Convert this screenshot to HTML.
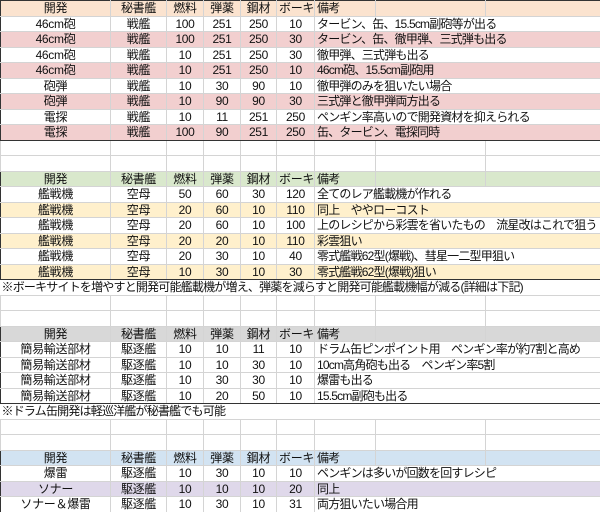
<!DOCTYPE html>
<html><head><meta charset="utf-8"><style>
html,body{margin:0;padding:0;background:#fff;width:600px;height:512px;overflow:hidden}
table{border-collapse:collapse;table-layout:fixed;width:600px;font-family:"Liberation Sans","Noto Sans CJK JP",sans-serif;font-size:12px;color:#111}
td{height:14.5px;padding:0 2px;border:1px solid #d4d4d4;white-space:nowrap;overflow:visible;text-align:center;line-height:14px;letter-spacing:-0.3px}
td.l{text-align:left;letter-spacing:-0.8px}
tr.top td{border-top:1.5px solid #333}
tr.bot td{border-bottom:1.5px solid #333}
tr.t td:first-child{border-left:1.5px solid #333}
tr.t td:last-child{border-right:1.5px solid #333}
tr.n td{border-left:none;border-right:none}
.h1 td{background:#fbe3cf}.p td{background:#f2cfcf}
.h2 td{background:#d9e8cc}.y td{background:#fff0cc}
.h3 td{background:#d8d8d8}
.h4 td{background:#d2e3f2}.v td{background:#dfd8ea}
</style></head><body>
<table>
<colgroup><col style="width:110px"><col style="width:56px"><col style="width:37px"><col style="width:37px"><col style="width:36px"><col style="width:38px"><col style="width:61px"><col style="width:110px"><col style="width:115px"></colgroup>
<tr class="t top h1"><td>開発</td><td>秘書艦</td><td>燃料</td><td>弾薬</td><td>鋼材</td><td>ボーキ</td><td class="l">備考</td><td></td><td></td></tr>
<tr class="t"><td>46cm砲</td><td>戦艦</td><td>100</td><td>251</td><td>250</td><td>10</td><td class="l" colspan="3">タービン、缶、15.5cm副砲等が出る</td></tr>
<tr class="t p"><td>46cm砲</td><td>戦艦</td><td>100</td><td>251</td><td>250</td><td>30</td><td class="l" colspan="3">タービン、缶、徹甲弾、三式弾も出る</td></tr>
<tr class="t"><td>46cm砲</td><td>戦艦</td><td>10</td><td>251</td><td>250</td><td>30</td><td class="l" colspan="3">徹甲弾、三式弾も出る</td></tr>
<tr class="t p"><td>46cm砲</td><td>戦艦</td><td>10</td><td>251</td><td>250</td><td>10</td><td class="l" colspan="3">46cm砲、15.5cm副砲用</td></tr>
<tr class="t"><td>砲弾</td><td>戦艦</td><td>10</td><td>30</td><td>90</td><td>10</td><td class="l" colspan="3">徹甲弾のみを狙いたい場合</td></tr>
<tr class="t p"><td>砲弾</td><td>戦艦</td><td>10</td><td>90</td><td>90</td><td>30</td><td class="l" colspan="3">三式弾と徹甲弾両方出る</td></tr>
<tr class="t"><td>電探</td><td>戦艦</td><td>10</td><td>11</td><td>251</td><td>250</td><td class="l" colspan="3">ペンギン率高いので開発資材を抑えられる</td></tr>
<tr class="t p bot"><td>電探</td><td>戦艦</td><td>100</td><td>90</td><td>251</td><td>250</td><td class="l" colspan="3">缶、タービン、電探同時</td></tr>
<tr><td></td><td></td><td></td><td></td><td></td><td></td><td></td><td></td><td></td></tr>
<tr><td></td><td></td><td></td><td></td><td></td><td></td><td></td><td></td><td></td></tr>
<tr class="t top h2"><td>開発</td><td>秘書艦</td><td>燃料</td><td>弾薬</td><td>鋼材</td><td>ボーキ</td><td class="l">備考</td><td></td><td></td></tr>
<tr class="t"><td>艦戦機</td><td>空母</td><td>50</td><td>60</td><td>30</td><td>120</td><td class="l" colspan="3">全てのレア艦載機が作れる</td></tr>
<tr class="t y"><td>艦戦機</td><td>空母</td><td>20</td><td>60</td><td>10</td><td>110</td><td class="l" colspan="3">同上　ややローコスト</td></tr>
<tr class="t"><td>艦戦機</td><td>空母</td><td>20</td><td>60</td><td>10</td><td>100</td><td class="l" colspan="3">上のレシピから彩雲を省いたもの　流星改はこれで狙う</td></tr>
<tr class="t y"><td>艦戦機</td><td>空母</td><td>20</td><td>20</td><td>10</td><td>110</td><td class="l" colspan="3">彩雲狙い</td></tr>
<tr class="t"><td>艦戦機</td><td>空母</td><td>20</td><td>30</td><td>10</td><td>40</td><td class="l" colspan="3">零式艦戦62型(爆戦)、彗星一二型甲狙い</td></tr>
<tr class="t y bot"><td>艦戦機</td><td>空母</td><td>10</td><td>30</td><td>10</td><td>30</td><td class="l" colspan="3">零式艦戦62型(爆戦)狙い</td></tr>
<tr class="n"><td class="l" colspan="9" style="padding-left:1px">※ボーキサイトを増やすと開発可能艦載機が増え、弾薬を減らすと開発可能艦載機幅が減る(詳細は下記)</td></tr>
<tr><td></td><td></td><td></td><td></td><td></td><td></td><td></td><td></td><td></td></tr>
<tr><td></td><td></td><td></td><td></td><td></td><td></td><td></td><td></td><td></td></tr>
<tr class="t top h3"><td>開発</td><td>秘書艦</td><td>燃料</td><td>弾薬</td><td>鋼材</td><td>ボーキ</td><td class="l">備考</td><td></td><td></td></tr>
<tr class="t"><td>簡易輸送部材</td><td>駆逐艦</td><td>10</td><td>10</td><td>11</td><td>10</td><td class="l" colspan="3">ドラム缶ピンポイント用　ペンギン率が約7割と高め</td></tr>
<tr class="t"><td>簡易輸送部材</td><td>駆逐艦</td><td>10</td><td>10</td><td>30</td><td>10</td><td class="l" colspan="3">10cm高角砲も出る　ペンギン率5割</td></tr>
<tr class="t"><td>簡易輸送部材</td><td>駆逐艦</td><td>10</td><td>30</td><td>30</td><td>10</td><td class="l" colspan="3">爆雷も出る</td></tr>
<tr class="t bot"><td>簡易輸送部材</td><td>駆逐艦</td><td>10</td><td>20</td><td>50</td><td>10</td><td class="l" colspan="3">15.5cm副砲も出る</td></tr>
<tr class="n"><td class="l" colspan="9" style="padding-left:1px">※ドラム缶開発は軽巡洋艦が秘書艦でも可能</td></tr>
<tr><td></td><td></td><td></td><td></td><td></td><td></td><td></td><td></td><td></td></tr>
<tr><td></td><td></td><td></td><td></td><td></td><td></td><td></td><td></td><td></td></tr>
<tr class="t top h4"><td>開発</td><td>秘書艦</td><td>燃料</td><td>弾薬</td><td>鋼材</td><td>ボーキ</td><td class="l">備考</td><td></td><td></td></tr>
<tr class="t"><td>爆雷</td><td>駆逐艦</td><td>10</td><td>30</td><td>10</td><td>10</td><td class="l" colspan="3">ペンギンは多いが回数を回すレシピ</td></tr>
<tr class="t v"><td>ソナー</td><td>駆逐艦</td><td>10</td><td>10</td><td>10</td><td>20</td><td class="l" colspan="3">同上</td></tr>
<tr class="t"><td>ソナー＆爆雷</td><td>駆逐艦</td><td>10</td><td>30</td><td>10</td><td>31</td><td class="l" colspan="3">両方狙いたい場合用</td></tr>
</table>
</body></html>
